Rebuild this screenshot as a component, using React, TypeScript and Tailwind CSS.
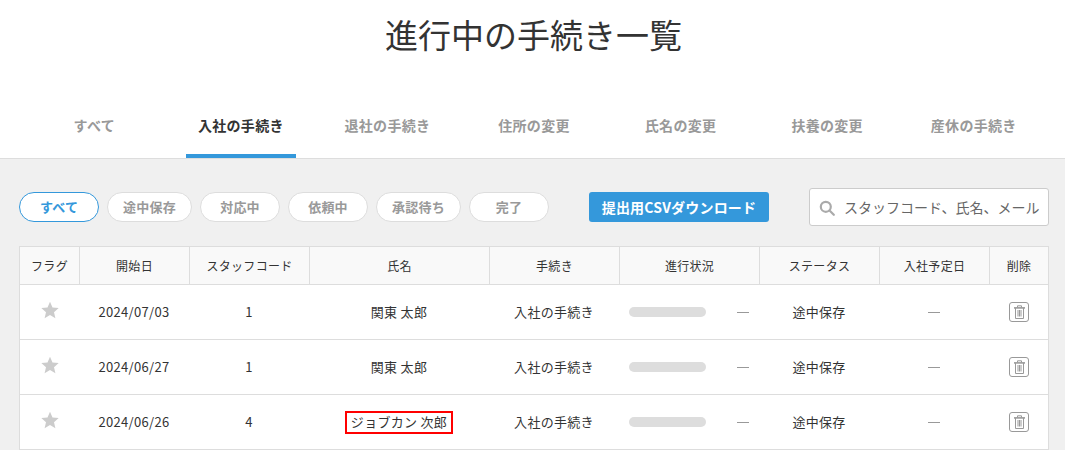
import React from "react";

const font = { fontFamily: '"Noto Sans CJK JP", "Noto Sans", sans-serif' };
const cols = "grid grid-cols-[60px_110px_120px_180px_130px_140px_120px_110px_58px]";
const tabs = ["すべて", "入社の手続き", "退社の手続き", "住所の変更", "氏名の変更", "扶養の変更", "産休の手続き"];
const pills = [
  ["すべて", "w-[80px]"],
  ["途中保存", "w-[85px]"],
  ["対応中", "w-[80px]"],
  ["依頼中", "w-[80px]"],
  ["承認待ち", "w-[85px]"],
  ["完了", "w-[80px]"],
];
const headers = ["フラグ", "開始日", "スタッフコード", "氏名", "手続き", "進行状況", "ステータス", "入社予定日", "削除"];
const rows = [
  ["2024/07/03", "1", "関東 太郎", false],
  ["2024/06/27", "1", "関東 太郎", false],
  ["2024/06/26", "4", "ジョブカン 次郎", true],
] as const;

function Star() {
  return (
    <svg width="18" height="18" viewBox="0 0 18 18" className="mt-[-5px]">
      <path d="M9 .8l2.5 5.7 6.2.6-4.7 4.1 1.4 6.1L9 14.1l-5.4 3.2L5 11.2.3 7.1l6.2-.6z" fill="#cccccc" />
    </svg>
  );
}

function Trash() {
  return (
    <span className="flex h-[20px] w-[20px] items-center justify-center rounded-[3px] border border-[#999999] bg-white">
      <svg width="13" height="14" viewBox="0 0 13 14" fill="none" stroke="#999999" strokeWidth="1">
        <path d="M1 2.9h11" strokeWidth="1.6" />
        <path d="M4.5 2.5V.8h4v1.7" />
        <path d="M2.5 3v10.5h8V3" />
        <path d="M5 5v6.5M6.5 5v6.5M8 5v6.5" />
      </svg>
    </span>
  );
}

export default function App() {
  return (
    <div style={font} className="h-[450px] w-[1065px] overflow-hidden bg-[#f0f0f0] text-[#333333]">
      <div className="h-[159px] border-b border-[#dddddd] bg-white">
        <h1 className="pt-[10px] pl-[2px] text-center text-[33px] leading-[48px] font-normal">進行中の手続き一覧</h1>
        <div className="mt-[45px] grid grid-cols-7 pr-[18px] pl-[21px]">
          {tabs.map((t, i) => (
            <div key={t} className="flex justify-center">
              <div
                className={
                  i === 1
                    ? "h-[55px] w-[110px] border-b-[4px] border-[#3498db] pt-[12px] text-center text-[14px] leading-[21px] font-bold tracking-[0.3px] text-[#333333]"
                    : "h-[55px] w-[110px] pt-[12px] text-center text-[14px] leading-[21px] font-bold tracking-[0.3px] text-[#999999]"
                }
              >
                {t}
              </div>
            </div>
          ))}
        </div>
      </div>

      <div className="flex items-center pt-[29px] pl-[19px]">
        <div className="flex gap-[8px]">
          {pills.map(([t, w], i) => (
            <div
              key={t}
              className={
                i === 0
                  ? `${w} h-[30px] rounded-[15px] border border-[#3498db] bg-white text-center text-[13px] leading-[28px] font-bold tracking-[0.2px] text-[#3498db]`
                  : `${w} h-[30px] rounded-[15px] border border-[#dddddd] bg-white text-center text-[13px] leading-[28px] font-bold tracking-[0.2px] text-[#999999]`
              }
            >
              {t}
            </div>
          ))}
        </div>
        <button className="ml-[40px] h-[30px] w-[180px] rounded-[3px] bg-[#3498db] text-center text-[14px] font-bold tracking-[0.2px] text-white">
          提出用CSVダウンロード
        </button>
        <div className="ml-[40px] flex h-[38px] w-[240px] items-center overflow-hidden rounded-[3px] border border-[#cccccc] bg-white pl-[9px]">
          <svg width="16" height="16" viewBox="0 0 16 16" fill="none" stroke="#aaaaaa" strokeWidth="2.2" className="mt-[2px] shrink-0">
            <circle cx="6.8" cy="6.8" r="5" />
            <path d="M10.5 10.5l4.3 4.3" strokeLinecap="round" />
          </svg>
          <span className="ml-[9px] text-[14px] whitespace-nowrap text-[#666666]">スタッフコード、氏名、メール</span>
        </div>
      </div>

      <div className="mt-[20px] ml-[19px] w-[1030px] border-x border-t border-[#dddddd] bg-white text-[12px] tracking-[0.3px]">
        <div className={`${cols} h-[38px] border-b border-[#dddddd] bg-[#f9f9f9] text-[12px]`}>
          {headers.map((h, i) => (
            <div key={h} className={i < 8 ? "flex items-center justify-center border-r border-[#dddddd]" : "flex items-center justify-center"}>
              {h}
            </div>
          ))}
        </div>
        {rows.map(([date, code, name, marked], i) => (
          <div key={i} className={`${cols} h-[55px] items-center border-b border-[#dddddd] text-[13px]`}>
            <div className="flex justify-center"><Star /></div>
            <div className="pr-[2px] text-center">{date}</div>
            <div className="pr-[2px] text-center">{code}</div>
            <div className="flex justify-center pr-[2px]">
              <span className={marked ? "border-2 border-[#ff0000] px-[4px] pb-[1px] leading-[18px]" : "pb-[1px] leading-[18px]"}>{name}</span>
            </div>
            <div className="pr-[2px] text-center">入社の手続き</div>
            <div className="flex items-center pl-[9px]">
              <div className="h-[10px] w-[77px] rounded-[5px] bg-[#dddddd]" />
              <span className="ml-[31px] h-px w-[12px] bg-[#999999]" />
            </div>
            <div className="pr-[2px] text-center">途中保存</div>
            <div className="flex justify-center pr-[2px]"><span className="h-px w-[12px] bg-[#999999]" /></div>
            <div className="flex justify-center"><Trash /></div>
          </div>
        ))}
      </div>
    </div>
  );
}
